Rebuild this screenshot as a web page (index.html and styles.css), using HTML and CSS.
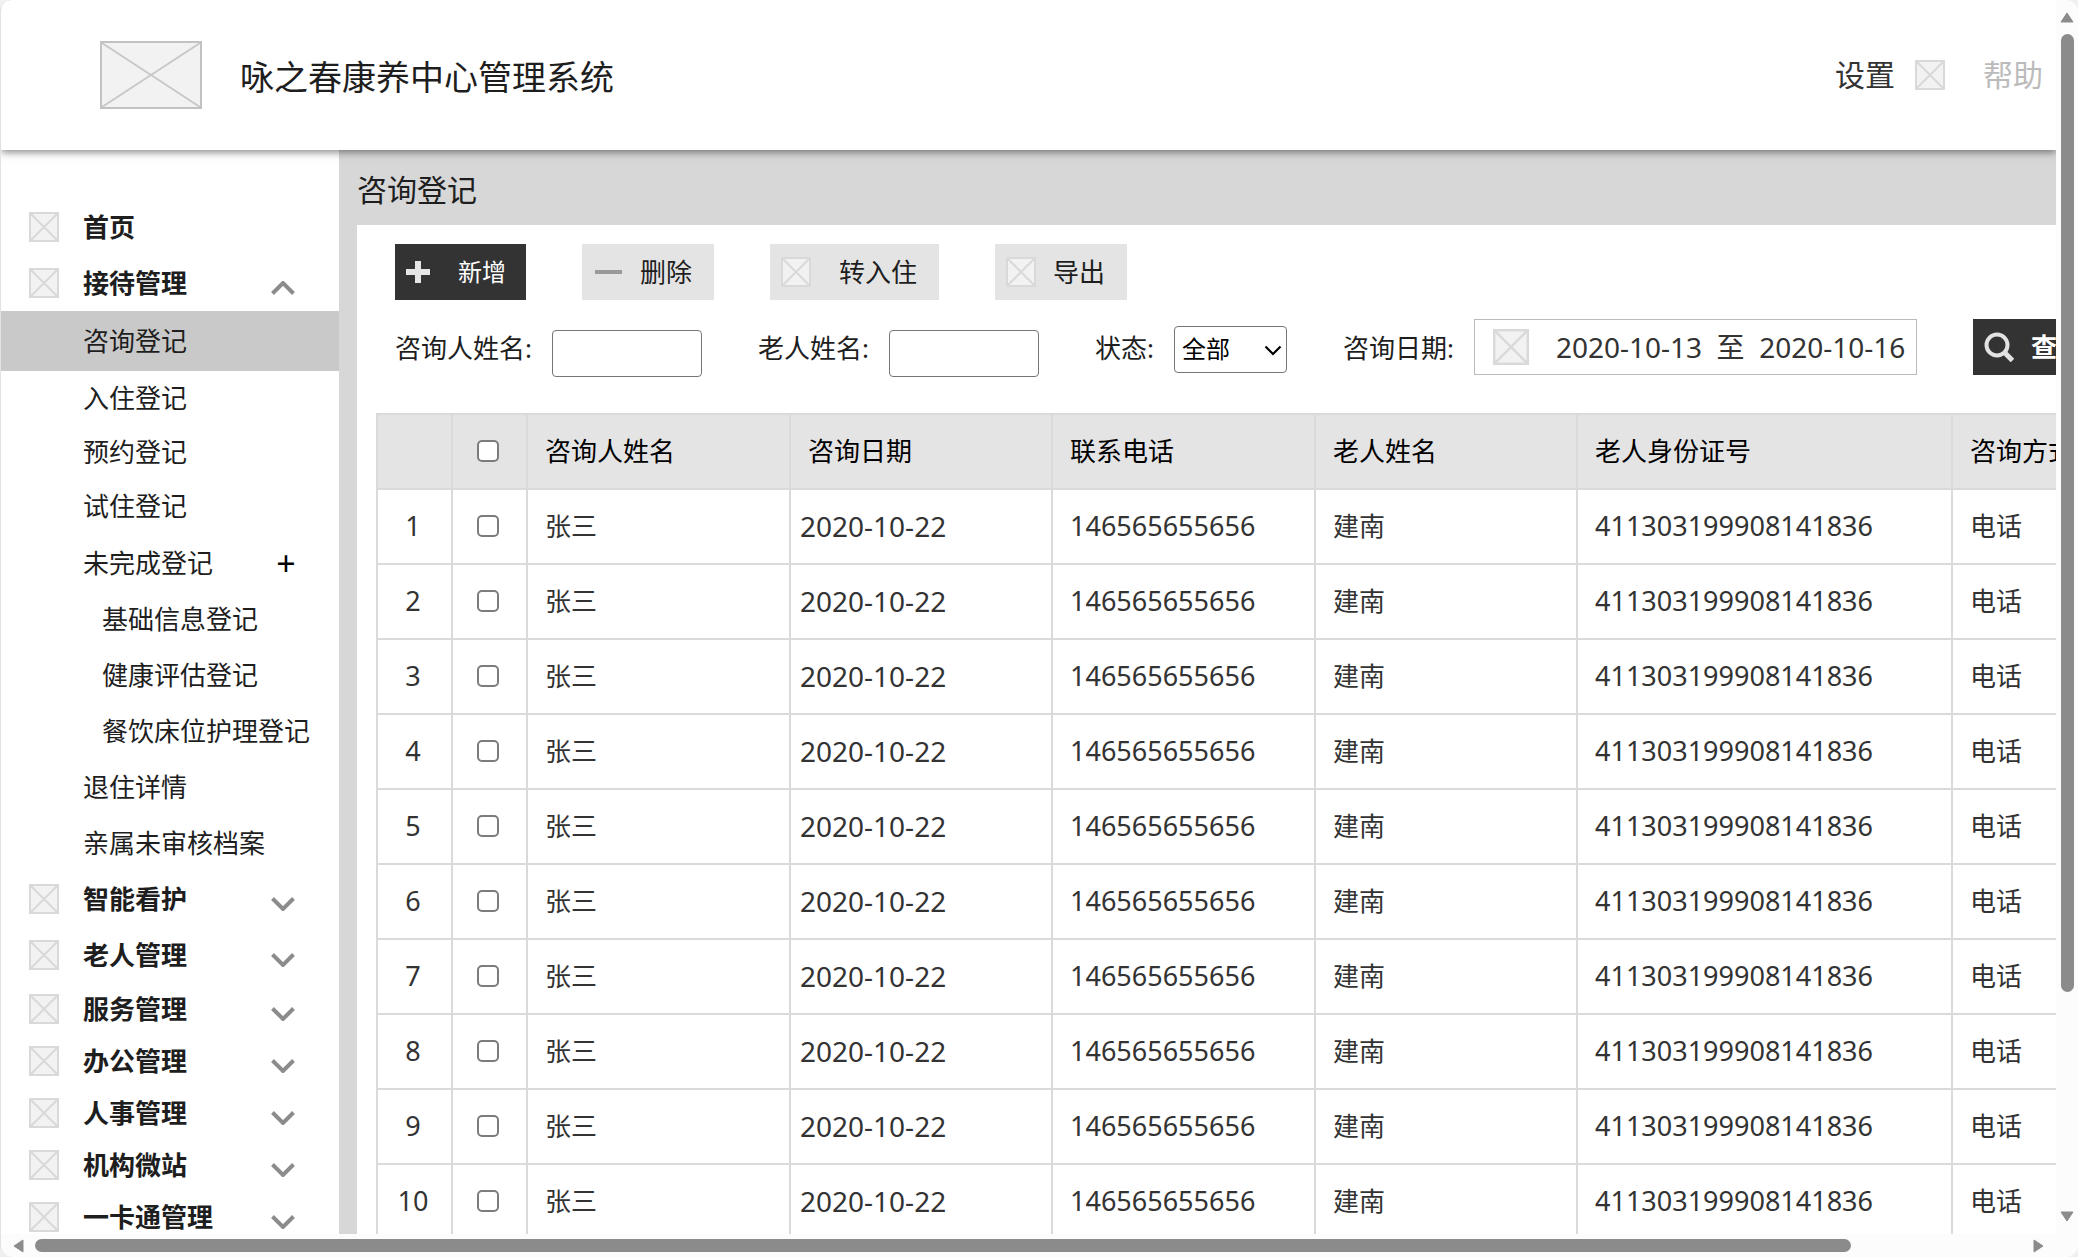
FILE: index.html
```html
<!DOCTYPE html>
<html lang="zh-CN">
<head>
<meta charset="utf-8">
<title>咏之春康养中心管理系统</title>
<link rel="stylesheet" href="styles.css">
</head>
<body>
<svg class="defs" aria-hidden="true">
  <symbol id="box" viewBox="0 0 30 30">
    <rect x="1" y="1" width="28" height="28" fill="#f2f2f2" stroke="#d9d9d9" stroke-width="2"/>
    <path d="M2 2 28 28M28 2 2 28" stroke="#d9d9d9" stroke-width="2" fill="none"/>
  </symbol>
  <symbol id="down" viewBox="0 0 24 14"><path d="M1.500 1.500 12 12 22.500 1.500" fill="none" stroke="#8c8c8c" stroke-width="4"/></symbol>
  <symbol id="up" viewBox="0 0 24 14"><path d="M1.500 12.500 12 2 22.500 12.500" fill="none" stroke="#8c8c8c" stroke-width="4"/></symbol>
</svg>
<div class="window">
  <div class="viewport">
    <header class="topbar">
      <svg class="logo" viewBox="0 0 102 68" aria-hidden="true">
        <rect x="1" y="1" width="100" height="66" fill="#f2f2f2" stroke="#c2c2c2" stroke-width="2"/>
        <path d="M2 2 100 66M100 2 2 66" stroke="#c8c8c8" stroke-width="2" fill="none"/>
      </svg>
      <h1 class="title">咏之春康养中心管理系统</h1>
      <nav class="tools">
        <a href="#" class="tool">设置</a>
        <svg class="icon"><use href="#box"/></svg>
        <a href="#" class="tool help">帮助</a>
      </nav>
    </header>
    <div class="body">
      <nav class="sidebar">
        <a href="#" class="item group"><svg class="icon"><use href="#box"/></svg><span>首页</span></a>
        <a href="#" class="item group"><svg class="icon"><use href="#box"/></svg><span>接待管理</span><svg class="chev"><use href="#up"/></svg></a>
        <a href="#" class="item sub active">咨询登记</a>
        <a href="#" class="item sub near">入住登记</a>
        <a href="#" class="item sub near">预约登记</a>
        <a href="#" class="item sub near">试住登记</a>
        <a href="#" class="item sub expander"><span>未完成登记</span><span class="plus">+</span></a>
        <a href="#" class="item deep">基础信息登记</a>
        <a href="#" class="item deep">健康评估登记</a>
        <a href="#" class="item deep">餐饮床位护理登记</a>
        <a href="#" class="item sub">退住详情</a>
        <a href="#" class="item sub">亲属未审核档案</a>
        <a href="#" class="item group"><svg class="icon"><use href="#box"/></svg><span>智能看护</span><svg class="chev"><use href="#down"/></svg></a>
        <a href="#" class="item group"><svg class="icon"><use href="#box"/></svg><span>老人管理</span><svg class="chev"><use href="#down"/></svg></a>
        <a href="#" class="item group compact"><svg class="icon"><use href="#box"/></svg><span>服务管理</span><svg class="chev"><use href="#down"/></svg></a>
        <a href="#" class="item group compact"><svg class="icon"><use href="#box"/></svg><span>办公管理</span><svg class="chev"><use href="#down"/></svg></a>
        <a href="#" class="item group compact"><svg class="icon"><use href="#box"/></svg><span>人事管理</span><svg class="chev"><use href="#down"/></svg></a>
        <a href="#" class="item group compact"><svg class="icon"><use href="#box"/></svg><span>机构微站</span><svg class="chev"><use href="#down"/></svg></a>
        <a href="#" class="item group compact"><svg class="icon"><use href="#box"/></svg><span>一卡通管理</span><svg class="chev"><use href="#down"/></svg></a>
      </nav>
      <main class="main">
        <h2 class="crumb">咨询登记</h2>
        <div class="panel">
          <div class="actions">
            <button type="button" class="btn dark wide"><svg class="add" viewBox="0 0 24 24"><path d="M12 1v22M0 12h24" stroke="#e6e6e6" stroke-width="6"/></svg>新增</button>
            <button type="button" class="btn"><svg class="icon" viewBox="0 0 30 30"><path d="M2 15h27" stroke="#999" stroke-width="4"/></svg>删除</button>
            <button type="button" class="btn wide"><svg class="icon"><use href="#box"/></svg>转入住</button>
            <button type="button" class="btn"><svg class="icon"><use href="#box"/></svg>导出</button>
          </div>
          <form class="filters">
            <div class="field"><label for="asker">咨询人姓名:</label><input id="asker" class="text" type="text"></div>
            <div class="field"><label for="elder">老人姓名:</label><input id="elder" class="text" type="text"></div>
            <div class="field"><label for="state">状态:</label>
              <span class="pick"><select id="state"><option>全部</option></select><svg class="arrow" viewBox="0 0 18 11"><path d="M1.500 1.500 9 9 16.500 1.500" fill="none" stroke="#000" stroke-width="2.200"/></svg></span>
            </div>
            <div class="field"><label for="dates">咨询日期:</label>
              <span class="range"><svg class="cal"><use href="#box"/></svg><input id="dates" type="text" value="2020-10-13  至  2020-10-16"></span>
            </div>
            <button type="button" class="btn dark search"><svg class="icon" viewBox="0 0 30 30"><circle cx="13" cy="13" r="10.500" fill="none" stroke="#e2e2e2" stroke-width="4"/><path d="M20 20 28.500 28.500" stroke="#e2e2e2" stroke-width="5"/></svg>查询</button>
          </form>
          <table class="grid">
            <colgroup><col class="c-s"><col class="c-s"><col class="c-m"><col class="c-n"><col class="c-m"><col class="c-n"><col class="c-l"><col class="c-m"></colgroup>
            <thead><tr><th></th><th class="mid"><input type="checkbox" aria-label="全选"></th><th>咨询人姓名</th><th>咨询日期</th><th>联系电话</th><th>老人姓名</th><th>老人身份证号</th><th>咨询方式</th></tr></thead>
            <tbody>
              <tr><td class="mid num">1</td><td class="mid"><input type="checkbox" aria-label="选择 1"></td><td>张三</td><td class="date">2020-10-22</td><td class="num">146565655656</td><td>建南</td><td class="num">411303199908141836</td><td>电话</td></tr>
              <tr><td class="mid num">2</td><td class="mid"><input type="checkbox" aria-label="选择 2"></td><td>张三</td><td class="date">2020-10-22</td><td class="num">146565655656</td><td>建南</td><td class="num">411303199908141836</td><td>电话</td></tr>
              <tr><td class="mid num">3</td><td class="mid"><input type="checkbox" aria-label="选择 3"></td><td>张三</td><td class="date">2020-10-22</td><td class="num">146565655656</td><td>建南</td><td class="num">411303199908141836</td><td>电话</td></tr>
              <tr><td class="mid num">4</td><td class="mid"><input type="checkbox" aria-label="选择 4"></td><td>张三</td><td class="date">2020-10-22</td><td class="num">146565655656</td><td>建南</td><td class="num">411303199908141836</td><td>电话</td></tr>
              <tr><td class="mid num">5</td><td class="mid"><input type="checkbox" aria-label="选择 5"></td><td>张三</td><td class="date">2020-10-22</td><td class="num">146565655656</td><td>建南</td><td class="num">411303199908141836</td><td>电话</td></tr>
              <tr><td class="mid num">6</td><td class="mid"><input type="checkbox" aria-label="选择 6"></td><td>张三</td><td class="date">2020-10-22</td><td class="num">146565655656</td><td>建南</td><td class="num">411303199908141836</td><td>电话</td></tr>
              <tr><td class="mid num">7</td><td class="mid"><input type="checkbox" aria-label="选择 7"></td><td>张三</td><td class="date">2020-10-22</td><td class="num">146565655656</td><td>建南</td><td class="num">411303199908141836</td><td>电话</td></tr>
              <tr><td class="mid num">8</td><td class="mid"><input type="checkbox" aria-label="选择 8"></td><td>张三</td><td class="date">2020-10-22</td><td class="num">146565655656</td><td>建南</td><td class="num">411303199908141836</td><td>电话</td></tr>
              <tr><td class="mid num">9</td><td class="mid"><input type="checkbox" aria-label="选择 9"></td><td>张三</td><td class="date">2020-10-22</td><td class="num">146565655656</td><td>建南</td><td class="num">411303199908141836</td><td>电话</td></tr>
              <tr><td class="mid num">10</td><td class="mid"><input type="checkbox" aria-label="选择 10"></td><td>张三</td><td class="date">2020-10-22</td><td class="num">146565655656</td><td>建南</td><td class="num">411303199908141836</td><td>电话</td></tr>
            </tbody>
          </table>
        </div>
      </main>
    </div>
  </div>
  <div class="vbar" aria-hidden="true">
    <svg class="tri" viewBox="0 0 14 14"><path d="M7 3 13 12H1z" fill="#8b8b8b" stroke="#8b8b8b" stroke-linejoin="round"/></svg>
    <div class="track"><div class="thumb"></div></div>
    <svg class="tri" viewBox="0 0 14 14"><path d="M7 11 13 2H1z" fill="#8b8b8b" stroke="#8b8b8b" stroke-linejoin="round"/></svg>
  </div>
  <div class="hbar" aria-hidden="true">
    <svg class="tri" viewBox="0 0 14 14"><path d="M3 7 12 1V13z" fill="#8b8b8b" stroke="#8b8b8b" stroke-linejoin="round"/></svg>
    <div class="track"><div class="thumb"></div></div>
    <svg class="tri" viewBox="0 0 14 14"><path d="M11 7 2 1V13z" fill="#8b8b8b" stroke="#8b8b8b" stroke-linejoin="round"/></svg>
  </div>
</div>
</body>
</html>
```
FILE: styles.css
```css
* { box-sizing: border-box; }
body {
  margin: 0;
  background: #f0f0f0;
  color: #1e1e1e;
  font: 26px/36px "Noto Sans", "Noto Sans CJK SC", sans-serif;
}
a { color: inherit; text-decoration: none; }
svg { display: block; flex: none; }
.defs { position: absolute; width: 0; height: 0; }
.icon { width: 30px; height: 30px; }

.window {
  display: grid;
  grid-template: minmax(0, 1fr) 23px / minmax(0, 1fr) 22px;
  height: 100vh;
  overflow: hidden;
  border-left: 1px solid #e2e2e2;
  border-radius: 12px;
  background: #fcfcfc;
}
.viewport {
  display: flex;
  flex-direction: column;
  overflow: hidden;
  background: #fff;
}

/* header */
.topbar {
  position: relative;
  z-index: 1;
  display: flex;
  flex: none;
  align-items: center;
  height: 150px;
  padding: 0 13px 0 99px;
  background: #fff;
  box-shadow: 0 2px 8px rgba(0, 0, 0, .5);
}
.logo { width: 102px; height: 68px; }
.title { margin: 0 0 0 38px; padding-top: 3px; font-size: 34px; line-height: 48px; font-weight: 400; }
.tools { display: flex; align-items: center; margin-left: auto; }
.tool { font-size: 30px; line-height: 40px; color: #333; margin-right: 20px; }
.help { margin: 0 0 0 38px; color: #bbb; }

.body { display: flex; flex: 1; min-height: 0; }

/* side menu */
.sidebar { flex: none; width: 338px; padding-top: 49px; }
.item { display: flex; align-items: center; height: 56px; padding: 0 44px 0 28px; white-space: nowrap; }
.group { font-weight: 700; gap: 24px; }
.compact { height: 52px; }
.sub { padding-left: 82px; }
.deep { padding: 0 0 0 101px; }
.near { height: 54px; }
.expander { margin-top: 2px; padding-right: 41px; }
.active { height: 60px; background: #c9c9c9; }
.chev { width: 24px; height: 14px; margin: 9px 0 0 auto; }
.plus { width: 24px; margin: 0 0 0 auto; text-align: center; font-size: 34px; color: #000; }

/* content */
.main { display: flex; flex-direction: column; flex: 1; min-width: 0; padding-left: 18px; background: #d7d7d7; }
.crumb { margin: 0; padding: 20px 0 15px; font-size: 30px; line-height: 40px; font-weight: 400; }
.panel { flex: 1; padding: 19px 0 0 19px; overflow: hidden; background: #fff; }
.actions { display: flex; gap: 56px; padding-left: 19px; }
.btn {
  display: flex;
  flex: none;
  align-items: center;
  gap: 17px;
  height: 56px;
  padding: 0 22px 0 11px;
  border: 0;
  background: #e4e4e4;
  color: #1e1e1e;
  font: inherit;
  white-space: nowrap;
}
.wide { gap: 28px; }
.dark { padding-right: 20px; background: #333; color: #fff; font-size: 24px; }
.add { width: 24px; height: 24px; }
.search { font-size: 26px; font-weight: 700; }

.filters { display: flex; align-items: center; gap: 56px; padding: 19px 0 0 19px; }
.field { display: flex; flex: none; align-items: center; gap: 20px; height: 56px; white-space: nowrap; }
.field label { padding-top: 2px; }
.text { width: 150px; height: 47px; margin: 12px 0 0; border: 1px solid #767676; border-radius: 4px; font: inherit; }
.pick { position: relative; margin-top: 4px; }
.pick select {
  display: block;
  width: 113px;
  height: 47px;
  padding: 0 7px;
  appearance: none;
  border: 1px solid #767676;
  border-radius: 4px;
  background: #fff;
  color: #000;
  font: inherit;
  font-size: 24px;
}
.arrow { position: absolute; right: 5px; top: 19px; width: 18px; height: 11px; pointer-events: none; }
.range { display: flex; align-items: center; gap: 27px; width: 443px; height: 56px; padding-left: 18px; border: 1px solid #bbb; }
.cal { width: 36px; height: 36px; }
.range input { flex: 1; min-width: 0; padding: 0; border: 0; outline: 0; color: #333; background: none; font: inherit; font-size: 28px; }

/* table */
.grid { width: 1836px; margin-top: 38px; table-layout: fixed; border-collapse: collapse; }
.c-s { width: 75px; }
.c-m { width: 263px; }
.c-n { width: 262px; }
.c-l { width: 375px; }
.grid tr { height: 75px; }
.grid th, .grid td { padding: 0 17px 1px; border: 2px solid #dadada; text-align: left; font-weight: 400; color: #333; }
.grid th { background: #e4e4e4; color: #000; }
.grid .mid { padding: 0 3px 1px 0; text-align: center; }
.grid .num { font-size: 27px; }
.grid .date { padding-left: 9px; font-size: 28px; }
.grid input {
  display: block;
  width: 22px;
  height: 22px;
  margin: 0 auto;
  appearance: none;
  border: 2px solid #7c7c7c;
  border-radius: 5px;
  background: #fff;
}
.grid input:checked { background: #333; }

/* scroll bars */
.vbar { display: flex; flex-direction: column; align-items: center; padding: 10px 0; }
.hbar { display: flex; align-items: center; gap: 10px; padding: 0 10px; }
.tri { width: 14px; height: 14px; }
.track { flex: 1; }
.thumb { border-radius: 7px; background: #8b8b8b; }
.vbar .track { padding-top: 10px; }
.vbar .thumb { width: 13px; height: 81.5%; }
.hbar .thumb { width: 91.4%; height: 13px; }
```
